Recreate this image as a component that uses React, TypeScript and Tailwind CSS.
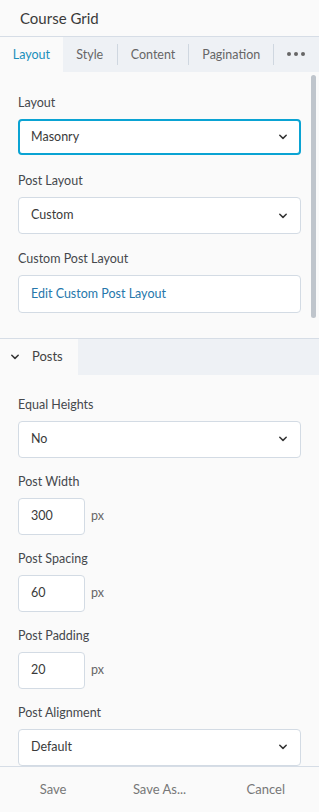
import React from 'react';

const font = { fontFamily: '"Segoe UI", Lato, "Noto Sans", sans-serif' };

function Chevron() {
  return (
    <svg width="10" height="6" viewBox="0 0 10 6" className="text-[#333]">
      <path d="M1.8 1.3 L5 4.4 L8.2 1.3" fill="none" stroke="currentColor" strokeWidth="1.5" strokeLinecap="round" strokeLinejoin="round" />
    </svg>
  );
}

function Label({ children }: { children: React.ReactNode }) {
  return <div className="h-4 leading-4 text-[12.5px] text-[#45484d]">{children}</div>;
}

function Select({ value, focused }: { value: string; focused?: boolean }) {
  return (
    <div
      className={
        focused
          ? 'mt-2 h-[36px] bg-white rounded-[4px] border-2 border-[#0aa3d3] pl-[11px] pr-[11px] flex items-center justify-between'
          : 'mt-2 h-[37px] bg-white rounded-[4px] border border-[#d3dbe4] pl-3 pr-3 flex items-center justify-between'
      }
    >
      <span className="text-[12.5px] text-[#3a3a3a]">{value}</span>
      <Chevron />
    </div>
  );
}

function PxInput({ value }: { value: string }) {
  return (
    <div className="mt-2 flex items-center gap-[6px]">
      <div className="w-[67px] h-[37px] bg-white rounded-[4px] border border-[#d3dbe4] pl-3 flex items-center text-[12.5px] text-[#3a3a3a]">
        {value}
      </div>
      <span className="text-[12.5px] text-[#666]">px</span>
    </div>
  );
}

export default function App() {
  return (
    <div style={font} className="w-[319px] h-[812px] bg-[#fafafa] flex flex-col overflow-hidden relative">
      {/* Title */}
      <div className="h-[37px] border-b border-[#d6dde6] pl-5 flex items-center text-[15px] text-[#3a3a3a]">
        Course Grid
      </div>

      {/* Tabs */}
      <div className="h-[36px] bg-[#eef1f5] flex items-center text-[12.5px] text-[#666]">
        <div className="w-[63px] h-full bg-[#fafafa] flex items-center justify-center pt-[3px] text-[#1b8fbb]">Layout</div>
        <div className="w-[54px] text-center pt-[3px]">Style</div>
        <div className="w-px h-[21px] bg-[#cfd7e0]" />
        <div className="w-[71px] text-center pt-[3px]">Content</div>
        <div className="w-px h-[21px] bg-[#cfd7e0]" />
        <div className="w-[84px] text-center pt-[3px]">Pagination</div>
        <div className="w-px h-[21px] bg-[#cfd7e0]" />
        <div className="w-[45px] flex items-center justify-center gap-[3px] pr-[1px]">
          <span className="w-[4px] h-[4px] rounded-full bg-[#666]" />
          <span className="w-[4px] h-[4px] rounded-full bg-[#666]" />
          <span className="w-[4px] h-[4px] rounded-full bg-[#666]" />
        </div>
      </div>

      {/* Layout section */}
      <div className="px-[18px] pt-[23px] pb-[25px] border-b border-[#d6dde6]">
        <Label>Layout</Label>
        <Select value="Masonry" focused />
        <div className="mt-[18px]">
          <Label>Post Layout</Label>
          <Select value="Custom" />
        </div>
        <div className="mt-[17px]">
          <Label>Custom Post Layout</Label>
          <div className="mt-2 h-[38px] bg-white rounded-[4px] border border-[#d3dbe4] pl-3 flex items-center text-[12.5px] text-[#2677ab]">
            Edit Custom Post Layout
          </div>
        </div>
      </div>

      {/* Posts header */}
      <div className="h-[36px] bg-[#eef1f5] flex">
        <div className="w-[78px] bg-[#fafafa] flex items-center pl-[10px] gap-[12px] text-[13px] text-[#444]">
          <Chevron />
          <span>Posts</span>
        </div>
      </div>

      {/* Posts fields */}
      <div className="flex-1 px-[18px] pt-[22px] flex flex-col gap-4">
        <div>
          <Label>Equal Heights</Label>
          <Select value="No" />
        </div>
        <div>
          <Label>Post Width</Label>
          <PxInput value="300" />
        </div>
        <div>
          <Label>Post Spacing</Label>
          <PxInput value="60" />
        </div>
        <div>
          <Label>Post Padding</Label>
          <PxInput value="20" />
        </div>
        <div>
          <Label>Post Alignment</Label>
          <Select value="Default" />
        </div>
      </div>

      {/* Footer */}
      <div className="h-[47px] border-t border-[#d6dde6] bg-[#fafafa] grid grid-cols-3 text-[13px] text-[#777]">
        <div className="flex items-center justify-center">Save</div>
        <div className="flex items-center justify-center">Save As...</div>
        <div className="flex items-center justify-center">Cancel</div>
      </div>

      {/* scrollbar thumb */}
      <div className="absolute left-[311px] top-[75px] w-[5px] h-[243px] rounded-full bg-[#bfc5cc]" />
    </div>
  );
}
